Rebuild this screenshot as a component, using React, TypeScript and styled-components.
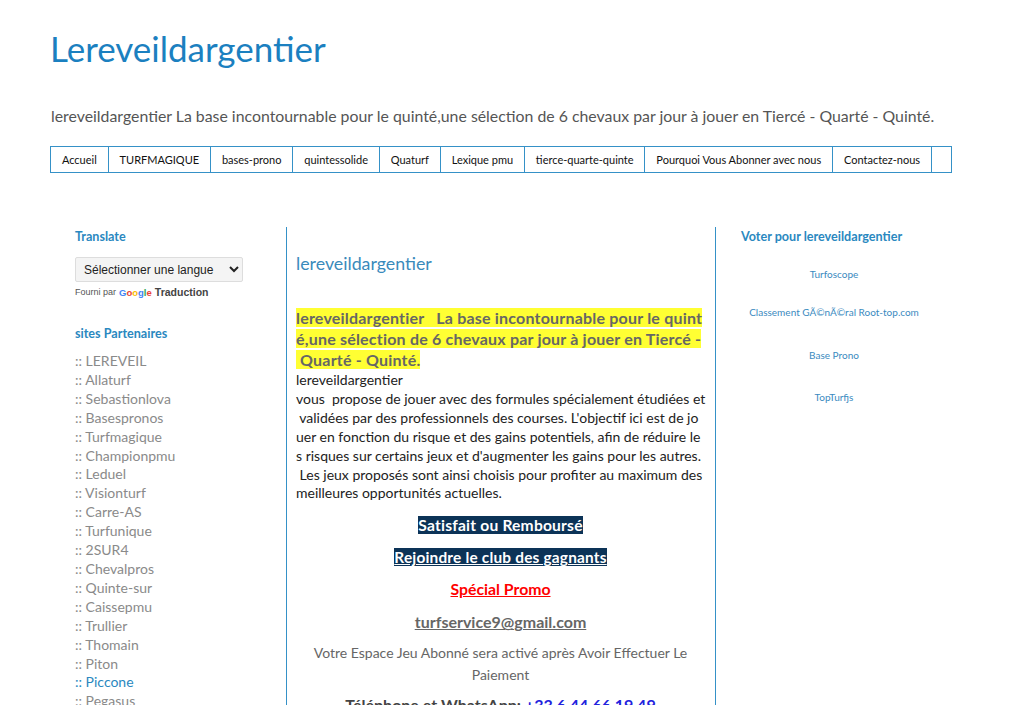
import { FC } from 'react';
import styled, { createGlobalStyle } from 'styled-components';

const GlobalStyle = createGlobalStyle`
  html, body {
    margin: 0;
    padding: 0;
    background: #fff;
  }
  body {
    font-family: Lato, "Open Sans", sans-serif;
    color: #333;
  }
`;

const Page = styled.div`
  width: 902px;
  padding-left: 50px;
`;

const SiteTitle = styled.h1`
  margin: 0;
  padding-top: 25px;
  font-size: 35px;
  font-weight: 400;
  line-height: 46px;
  color: #1b80c0;
`;

const Tagline = styled.p`
  margin: 35px 0 0 1px;
  font-size: 15.85px;
  line-height: 20px;
  color: #555;
`;

const Nav = styled.ul`
  display: flex;
  margin: 20px 0 0;
  padding: 0;
  list-style: none;
  border: 1px solid #3591c7;
  height: 25px;
`;

const NavItem = styled.li`
  display: flex;
  align-items: center;
  padding: 0 10.9px;
  border-right: 1px solid #3591c7;
  font-size: 11px;
  color: #111;
  white-space: nowrap;
`;

const Columns = styled.div`
  display: grid;
  grid-template-columns: 236px 430px 236px;
  margin-top: 54px;
`;

const LeftCol = styled.aside`
  padding: 2px 0 0 25px;
`;

const MainCol = styled.main`
  border-left: 1px solid #3591c7;
  border-right: 1px solid #3591c7;
  padding: 26px 10px 0 9px;
  min-height: 480px;
`;

const RightCol = styled.aside`
  padding: 2px 0 0 25px;
`;

const WidgetTitle = styled.h3`
  margin: 0;
  font-size: 12.6px;
  font-weight: 700;
  line-height: 16px;
  color: #2a88c0;
`;

const Widget = styled.section<{ $gap?: number }>`
  & + & {
    margin-top: ${({ $gap }) => $gap ?? 30}px;
  }
`;

const LangSelect = styled.select`
  margin-top: 12px;
  width: 168px;
  height: 25px;
  font-family: "Liberation Sans", Arial, sans-serif;
  font-size: 12px;
  color: #222;
  background: #f4f4f4;
  border: 1px solid #ddd;
  border-radius: 2px;
  padding: 0 4px;
`;

const Powered = styled.div`
  margin-top: 4px;
  display: flex;
  align-items: center;
  gap: 3px;
  font-family: "Liberation Sans", Arial, sans-serif;
  font-size: 9px;
  color: #555;
  b {
    color: #444;
    font-weight: 700;
    font-size: 10.5px;
  }
`;

const GoogleMark = styled.span`
  font-size: 9.5px;
  font-weight: 700;
`;

const Letter = styled.span<{ $c: string }>`
  color: ${({ $c }) => $c};
`;

const PartnerList = styled.ul`
  margin: 10px 0 0;
  padding: 0;
  list-style: none;
`;

const Partner = styled.li<{ $active?: boolean }>`
  font-size: 14px;
  line-height: 18.9px;
  color: ${({ $active }) => ($active ? '#2a88c0' : '#8a8a8a')};
`;

const PostTitle = styled.h2`
  margin: 0;
  font-size: 17.8px;
  font-weight: 400;
  line-height: 20px;
  color: #3a8abb;
`;

const Highlight = styled.p`
  margin: 34px 0 0;
  font-size: 16px;
  font-weight: 700;
  line-height: 21px;
  letter-spacing: 0.2px;
  color: #666;
  white-space: nowrap;
  span {
    background: #ffff33;
  }
`;

const Body = styled.p`
  margin: 1px 0 0;
  font-size: 14px;
  line-height: 18.9px;
  color: #222;
  white-space: nowrap;
`;

const Center = styled.p<{ $size?: number; $gap?: number }>`
  margin: ${({ $gap }) => $gap ?? 12}px 0 0;
  text-align: center;
  font-size: ${({ $size }) => $size ?? 14}px;
  line-height: 20px;
`;

const Badge = styled.span<{ $underline?: boolean }>`
  background: #0c3357;
  color: #fff;
  font-weight: 700;
  letter-spacing: 0.2px;
  text-decoration: ${({ $underline }) => ($underline ? 'underline' : 'none')};
`;

const LinkText = styled.span<{ $color: string }>`
  color: ${({ $color }) => $color};
  font-weight: 700;
  text-decoration: underline;
`;

const Notice = styled.p`
  margin: 10px 0 0;
  text-align: center;
  font-size: 14px;
  line-height: 22px;
  color: #666;
`;

const Phone = styled.p`
  margin: 9px 0 0;
  text-align: center;
  font-size: 16px;
  font-weight: 700;
  line-height: 20px;
  color: #444;
  span {
    color: #2222dd;
  }
`;

const VoteList = styled.ul`
  margin: 0 0 0 -25px;
  padding: 0;
  list-style: none;
  text-align: center;
`;

const VoteItem = styled.li<{ $gap: number }>`
  margin-top: ${({ $gap }) => $gap}px;
  font-size: 10px;
  line-height: 14px;
  color: #3a8ac0;
`;

const navItems = [
  'Accueil',
  'TURFMAGIQUE',
  'bases-prono',
  'quintessolide',
  'Quaturf',
  'Lexique pmu',
  'tierce-quarte-quinte',
  'Pourquoi Vous Abonner avec nous',
  'Contactez-nous',
];

const partners = [
  'LEREVEIL',
  'Allaturf',
  'Sebastionlova',
  'Basespronos',
  'Turfmagique',
  'Championpmu',
  'Leduel',
  'Visionturf',
  'Carre-AS',
  'Turfunique',
  '2SUR4',
  'Chevalpros',
  'Quinte-sur',
  'Caissepmu',
  'Trullier',
  'Thomain',
  'Piton',
  'Piccone',
  'Pegasus',
  'Turfpronos',
];

const votes = [
  { label: 'Turfoscope', gap: 22 },
  { label: 'Classement GÃ©nÃ©ral Root-top.com', gap: 24 },
  { label: 'Base Prono', gap: 29 },
  { label: 'TopTurfjs', gap: 28 },
];

const GoogleLogo: FC = () => (
  <GoogleMark>
    <Letter $c="#4285f4">G</Letter>
    <Letter $c="#ea4335">o</Letter>
    <Letter $c="#fbbc05">o</Letter>
    <Letter $c="#4285f4">g</Letter>
    <Letter $c="#34a853">l</Letter>
    <Letter $c="#ea4335">e</Letter>
  </GoogleMark>
);

const App: FC = () => (
  <>
    <GlobalStyle />
    <Page>
      <SiteTitle>Lereveildargentier</SiteTitle>
      <Tagline>
        lereveildargentier La base incontournable pour le quinté,une sélection de 6 chevaux par jour à jouer en Tiercé - Quarté - Quinté.
      </Tagline>
      <Nav>
        {navItems.map((item) => (
          <NavItem key={item}>{item}</NavItem>
        ))}
      </Nav>
      <Columns>
        <LeftCol>
          <Widget>
            <WidgetTitle>Translate</WidgetTitle>
            <LangSelect defaultValue="">
              <option value="">Sélectionner une langue</option>
            </LangSelect>
            <Powered>
              Fourni par <GoogleLogo /> <b>Traduction</b>
            </Powered>
          </Widget>
          <Widget $gap={28}>
            <WidgetTitle>sites Partenaires</WidgetTitle>
            <PartnerList>
              {partners.map((p) => (
                <Partner key={p} $active={p === 'Piccone'}>
                  :: {p}
                </Partner>
              ))}
            </PartnerList>
          </Widget>
        </LeftCol>
        <MainCol>
          <PostTitle>lereveildargentier</PostTitle>
          <Highlight>
            <span>lereveildargentier &nbsp; La base incontournable pour le quint</span>
            <br />
            <span>é,une sélection de 6 chevaux par jour à jouer en Tiercé -</span>
            <br />
            <span>&nbsp;Quarté - Quinté.</span>
          </Highlight>
          <Body>
            lereveildargentier
            <br />
            vous &nbsp;propose de jouer avec des formules spécialement étudiées et
            <br />
            &nbsp;validées par des professionnels des courses. L'objectif ici est de jo
            <br />
            uer en fonction du risque et des gains potentiels, afin de réduire le
            <br />
            s risques sur certains jeux et d'augmenter les gains pour les autres.
            <br />
            &nbsp;Les jeux proposés sont ainsi choisis pour profiter au maximum des
            <br />
            meilleures opportunités actuelles.
          </Body>
          <Center $size={15.6} $gap={12}>
            <Badge>Satisfait ou Remboursé</Badge>
          </Center>
          <Center $size={15.4} $gap={12}>
            <Badge $underline>Rejoindre le club des gagnants</Badge>
          </Center>
          <Center $size={15.8} $gap={12}>
            <LinkText $color="#f00">Spécial Promo</LinkText>
          </Center>
          <Center $size={16} $gap={13}>
            <LinkText $color="#666">turfservice9@gmail.com</LinkText>
          </Center>
          <Notice>
            Votre Espace Jeu Abonné sera activé après Avoir Effectuer Le
            <br />
            Paiement
          </Notice>
          <Phone>
            Téléphone et WhatsApp: <span>+33 6 44 66 19 49</span>
          </Phone>
        </MainCol>
        <RightCol>
          <WidgetTitle>Voter pour lereveildargentier</WidgetTitle>
          <VoteList>
            {votes.map((v) => (
              <VoteItem key={v.label} $gap={v.gap}>
                {v.label}
              </VoteItem>
            ))}
          </VoteList>
        </RightCol>
      </Columns>
    </Page>
  </>
);

export default App;
